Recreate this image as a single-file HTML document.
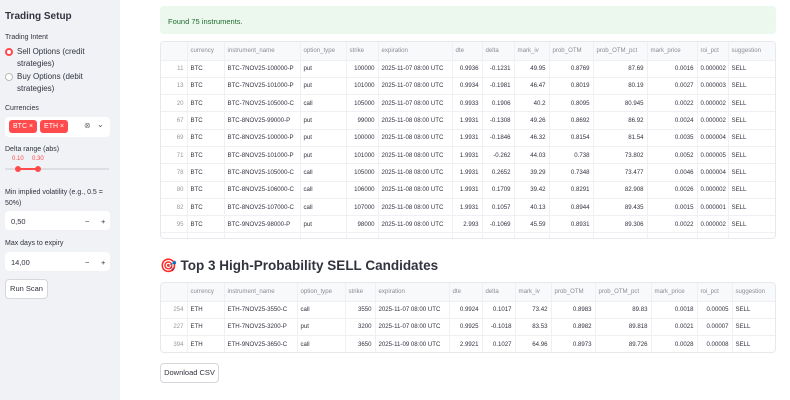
<!DOCTYPE html>
<html><head><meta charset="utf-8"><style>
*{box-sizing:border-box;margin:0;padding:0}
body{width:790px;height:400px;overflow:hidden;background:#fff;font-family:"Liberation Sans",sans-serif;color:#31333f;position:relative}
.sb{position:absolute;left:0;top:0;width:120px;height:400px;background:#f0f2f6}
.a{position:absolute}
.lbl{font-size:7px;color:#31333f}
.tw{position:absolute;left:160px;width:616px;border:1px solid #e6e8ec;border-radius:4px;overflow:hidden;background:#fff}
table{border-collapse:collapse;table-layout:fixed;font-size:6.1px;width:100%}
td,th{height:17.3px;padding:0 3px;border-right:1px solid #eef0f3;border-bottom:1px solid #eef0f3;white-space:nowrap;overflow:hidden;font-weight:normal}
th{background:#f8f9fb;color:#8a8d96;text-align:left;height:18px}
td.i{color:#999;text-align:right}
td.r{text-align:right}
.inp{position:absolute;left:5px;width:105px;height:19px;background:#fff;border-radius:4px;font-size:7.5px;padding:6px 0 0 6px}
.tag{display:inline-block;background:#ff4b4b;color:#fff;font-size:7px;border-radius:3px;padding:3px 4px;margin-right:3px}
</style></head><body>
<div class="sb">
<div class="a" style="left:5px;top:11px;font-size:10px;font-weight:bold">Trading Setup</div>
<div class="a lbl" style="left:5px;top:34px">Trading Intent</div>
<div class="a" style="left:5px;top:48px;width:8px;height:8px;border-radius:50%;border:2.5px solid #ff4b4b;background:#fff"></div>
<div class="a" style="left:17px;top:46px;font-size:8px;line-height:12px">Sell Options (credit<br>strategies)</div>
<div class="a" style="left:5px;top:73px;width:8px;height:8px;border-radius:50%;border:1px solid #bbb;background:#fff"></div>
<div class="a" style="left:17px;top:71px;font-size:8px;line-height:12px">Buy Options (debit<br>strategies)</div>
<div class="a lbl" style="left:5px;top:105px">Currencies</div>
<div class="inp" style="top:117px;height:20px;padding:3px 0 0 4px"><span class="tag">BTC ×</span><span class="tag">ETH ×</span><span style="position:absolute;left:79px;top:4px;font-size:8px;color:#777">⊗</span><span style="position:absolute;left:92px;top:3px;font-size:8px;color:#555">⌄</span></div>
<div class="a lbl" style="left:5px;top:146px">Delta range (abs)</div>
<div class="a" style="left:12px;top:156px;font-size:6px;color:#ff4b4b">0.10</div>
<div class="a" style="left:32px;top:156px;font-size:6px;color:#ff4b4b">0.30</div>
<div class="a" style="left:5px;top:168px;width:104px;height:2px;background:#dcdee3"></div>
<div class="a" style="left:17px;top:168px;width:20px;height:2px;background:#ff4b4b"></div>
<div class="a" style="left:15px;top:166px;width:6px;height:6px;border-radius:50%;background:#ff4b4b"></div>
<div class="a" style="left:35px;top:166px;width:6px;height:6px;border-radius:50%;background:#ff4b4b"></div>
<div class="a lbl" style="left:5px;top:187px;line-height:11px">Min implied volatility (e.g., 0.5 =<br>50%)</div>
<div class="inp" style="top:211px">0,50<span style="position:absolute;left:80px">−</span><span style="position:absolute;left:96px">+</span></div>
<div class="a lbl" style="left:5px;top:240px">Max days to expiry</div>
<div class="inp" style="top:252px">14,00<span style="position:absolute;left:80px">−</span><span style="position:absolute;left:96px">+</span></div>
<div class="a" style="left:5px;top:279px;width:43px;height:20px;background:#fff;border:1px solid #d5d7dc;border-radius:4px;font-size:7.5px;text-align:center;line-height:18px">Run Scan</div>
</div>

<div class="a" style="left:160px;top:6px;width:616px;height:28px;background:#ecf7ed;border-radius:4px;font-size:7.5px;color:#1e6e2e;padding:11px 0 0 8px">Found 75 instruments.</div>

<div class="tw" style="top:41px;height:198px">
<table>
<colgroup><col style="width:26px"><col style="width:37px"><col style="width:76px"><col style="width:46px"><col style="width:32px"><col style="width:74px"><col style="width:30px"><col style="width:32px"><col style="width:35px"><col style="width:44px"><col style="width:54px"><col style="width:50px"><col style="width:31px"><col style="width:49px"></colgroup>
<tr><th></th><th>currency</th><th>instrument_name</th><th>option_type</th><th>strike</th><th>expiration</th><th>dte</th><th>delta</th><th>mark_iv</th><th>prob_OTM</th><th>prob_OTM_pct</th><th>mark_price</th><th>roi_pct</th><th>suggestion</th></tr>
<tr><td class="i">11</td><td>BTC</td><td>BTC-7NOV25-100000-P</td><td>put</td><td class="r">100000</td><td>2025-11-07 08:00 UTC</td><td class="r">0.9936</td><td class="r">-0.1231</td><td class="r">49.95</td><td class="r">0.8769</td><td class="r">87.69</td><td class="r">0.0016</td><td class="r">0.000002</td><td>SELL</td></tr>
<tr><td class="i">13</td><td>BTC</td><td>BTC-7NOV25-101000-P</td><td>put</td><td class="r">101000</td><td>2025-11-07 08:00 UTC</td><td class="r">0.9934</td><td class="r">-0.1981</td><td class="r">46.47</td><td class="r">0.8019</td><td class="r">80.19</td><td class="r">0.0027</td><td class="r">0.000003</td><td>SELL</td></tr>
<tr><td class="i">20</td><td>BTC</td><td>BTC-7NOV25-105000-C</td><td>call</td><td class="r">105000</td><td>2025-11-07 08:00 UTC</td><td class="r">0.9933</td><td class="r">0.1906</td><td class="r">40.2</td><td class="r">0.8095</td><td class="r">80.945</td><td class="r">0.0022</td><td class="r">0.000002</td><td>SELL</td></tr>
<tr><td class="i">67</td><td>BTC</td><td>BTC-8NOV25-99000-P</td><td>put</td><td class="r">99000</td><td>2025-11-08 08:00 UTC</td><td class="r">1.9931</td><td class="r">-0.1308</td><td class="r">49.26</td><td class="r">0.8692</td><td class="r">86.92</td><td class="r">0.0024</td><td class="r">0.000002</td><td>SELL</td></tr>
<tr><td class="i">69</td><td>BTC</td><td>BTC-8NOV25-100000-P</td><td>put</td><td class="r">100000</td><td>2025-11-08 08:00 UTC</td><td class="r">1.9931</td><td class="r">-0.1846</td><td class="r">46.32</td><td class="r">0.8154</td><td class="r">81.54</td><td class="r">0.0035</td><td class="r">0.000004</td><td>SELL</td></tr>
<tr><td class="i">71</td><td>BTC</td><td>BTC-8NOV25-101000-P</td><td>put</td><td class="r">101000</td><td>2025-11-08 08:00 UTC</td><td class="r">1.9931</td><td class="r">-0.262</td><td class="r">44.03</td><td class="r">0.738</td><td class="r">73.802</td><td class="r">0.0052</td><td class="r">0.000005</td><td>SELL</td></tr>
<tr><td class="i">78</td><td>BTC</td><td>BTC-8NOV25-105000-C</td><td>call</td><td class="r">105000</td><td>2025-11-08 08:00 UTC</td><td class="r">1.9931</td><td class="r">0.2652</td><td class="r">39.29</td><td class="r">0.7348</td><td class="r">73.477</td><td class="r">0.0046</td><td class="r">0.000004</td><td>SELL</td></tr>
<tr><td class="i">80</td><td>BTC</td><td>BTC-8NOV25-106000-C</td><td>call</td><td class="r">106000</td><td>2025-11-08 08:00 UTC</td><td class="r">1.9931</td><td class="r">0.1709</td><td class="r">39.42</td><td class="r">0.8291</td><td class="r">82.908</td><td class="r">0.0026</td><td class="r">0.000002</td><td>SELL</td></tr>
<tr><td class="i">82</td><td>BTC</td><td>BTC-8NOV25-107000-C</td><td>call</td><td class="r">107000</td><td>2025-11-08 08:00 UTC</td><td class="r">1.9931</td><td class="r">0.1057</td><td class="r">40.13</td><td class="r">0.8944</td><td class="r">89.435</td><td class="r">0.0015</td><td class="r">0.000001</td><td>SELL</td></tr>
<tr><td class="i">95</td><td>BTC</td><td>BTC-9NOV25-98000-P</td><td>put</td><td class="r">98000</td><td>2025-11-09 08:00 UTC</td><td class="r">2.993</td><td class="r">-0.1069</td><td class="r">45.59</td><td class="r">0.8931</td><td class="r">89.306</td><td class="r">0.0022</td><td class="r">0.000002</td><td>SELL</td></tr>
<tr><td class="i">96</td><td>BTC</td><td>BTC-9NOV25-99000-P</td><td>put</td><td class="r">99000</td><td>2025-11-09 08:00 UTC</td><td class="r">2.993</td><td class="r">-0.13</td><td class="r">44.1</td><td class="r">0.87</td><td class="r">87.0</td><td class="r">0.0025</td><td class="r">0.000002</td><td>SELL</td></tr>
</table></div>

<div class="a" style="left:160px;top:258px;font-size:13.5px;font-weight:bold;color:#31333f">🎯 Top 3 High-Probability SELL Candidates</div>

<div class="tw" style="top:282px;height:71px">
<table>
<colgroup><col style="width:26px"><col style="width:37px"><col style="width:73px"><col style="width:48px"><col style="width:30px"><col style="width:74px"><col style="width:33px"><col style="width:33px"><col style="width:36px"><col style="width:44px"><col style="width:56px"><col style="width:46px"><col style="width:35px"><col style="width:45px"></colgroup>
<tr><th></th><th>currency</th><th>instrument_name</th><th>option_type</th><th>strike</th><th>expiration</th><th>dte</th><th>delta</th><th>mark_iv</th><th>prob_OTM</th><th>prob_OTM_pct</th><th>mark_price</th><th>roi_pct</th><th>suggestion</th></tr>
<tr><td class="i">254</td><td>ETH</td><td>ETH-7NOV25-3550-C</td><td>call</td><td class="r">3550</td><td>2025-11-07 08:00 UTC</td><td class="r">0.9924</td><td class="r">0.1017</td><td class="r">73.42</td><td class="r">0.8983</td><td class="r">89.83</td><td class="r">0.0018</td><td class="r">0.00005</td><td>SELL</td></tr>
<tr><td class="i">227</td><td>ETH</td><td>ETH-7NOV25-3200-P</td><td>put</td><td class="r">3200</td><td>2025-11-07 08:00 UTC</td><td class="r">0.9925</td><td class="r">-0.1018</td><td class="r">83.53</td><td class="r">0.8982</td><td class="r">89.818</td><td class="r">0.0021</td><td class="r">0.00007</td><td>SELL</td></tr>
<tr><td class="i">394</td><td>ETH</td><td>ETH-9NOV25-3650-C</td><td>call</td><td class="r">3650</td><td>2025-11-09 08:00 UTC</td><td class="r">2.9921</td><td class="r">0.1027</td><td class="r">64.96</td><td class="r">0.8973</td><td class="r">89.726</td><td class="r">0.0028</td><td class="r">0.00008</td><td>SELL</td></tr>
</table></div>

<div class="a" style="left:160px;top:363px;width:59px;height:20px;border:1px solid #d5d7dc;border-radius:4px;font-size:7.5px;text-align:center;line-height:18px">Download CSV</div>
</body></html>
